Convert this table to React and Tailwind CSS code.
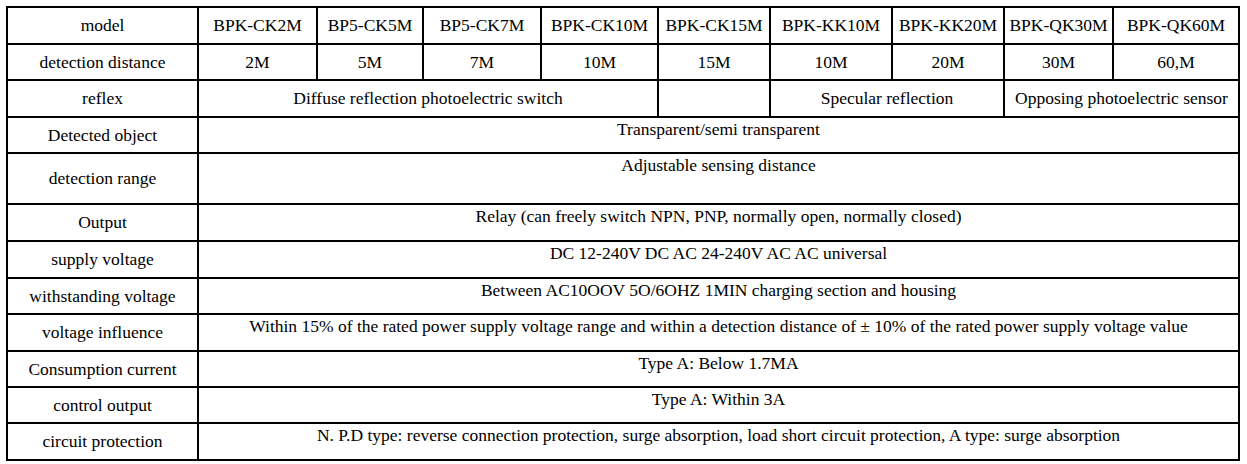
const models = ['BPK-CK2M', 'BP5-CK5M', 'BP5-CK7M', 'BPK-CK10M', 'BPK-CK15M', 'BPK-KK10M', 'BPK-KK20M', 'BPK-QK30M', 'BPK-QK60M']
const distances = ['2M', '5M', '7M', '10M', '15M', '10M', '20M', '30M', '60,M']
const widths = [191, 119, 106, 118, 117, 112, 122, 112, 109, 126]

const specs = [
  ['Detected object', 'Transparent/semi transparent', 'h-[36px]'],
  ['detection range', 'Adjustable sensing distance', 'h-[51px]'],
  ['Output', 'Relay (can freely switch NPN, PNP, normally open, normally closed)', 'h-[37px]'],
  ['supply voltage', 'DC 12-240V DC AC 24-240V AC AC universal', 'h-[37px]'],
  ['withstanding voltage', 'Between AC10OOV 5O/6OHZ 1MIN charging section and housing', 'h-[36px]'],
  ['voltage influence', 'Within 15% of the rated power supply voltage range and within a detection distance of ± 10% of the rated power supply voltage value', 'h-[37px]'],
  ['Consumption current', 'Type A: Below 1.7MA', 'h-[36px]'],
  ['control output', 'Type A: Within 3A', 'h-[36px]'],
  ['circuit protection', 'N. P.D type: reverse connection protection, surge absorption, load short circuit protection, A type: surge absorption', 'h-[37px]'],
]

const cell = 'border-2 border-black text-center align-middle p-0'

export default function App() {
  return (
    <div className="min-h-[464px] w-[1247px] bg-white pt-[6px] pl-[6px] text-black text-[17.5px] leading-[19px] font-['Liberation_Serif','Times_New_Roman',serif]">
      <table className="border-collapse table-fixed w-[1234px]">
        <colgroup>
          {widths.map((w, i) => <col key={i} style={{ width: w }} />)}
        </colgroup>
        <tbody>
          <tr className="h-[37px]">
            <td className={cell}>model</td>
            {models.map(m => <td key={m} className={`${cell} whitespace-nowrap`}>{m}</td>)}
          </tr>
          <tr className="h-[36px]">
            <td className={cell}>detection distance</td>
            {distances.map((d, i) => <td key={i} className={cell}>{d}</td>)}
          </tr>
          <tr className="h-[37px]">
            <td className={cell}>reflex</td>
            <td colSpan={4} className={cell}>Diffuse reflection photoelectric switch</td>
            <td className={cell}></td>
            <td colSpan={2} className={cell}>Specular reflection</td>
            <td colSpan={2} className={`${cell} whitespace-nowrap`}>Opposing photoelectric sensor</td>
          </tr>
          {specs.map(([label, value, h]) => (
            <tr key={label} className={h}>
              <td className={cell}>{label}</td>
              <td colSpan={9} className="border-2 border-black text-center align-top pt-[2px] px-0 pb-0 whitespace-nowrap">{value}</td>
            </tr>
          ))}
        </tbody>
      </table>
    </div>
  )
}
